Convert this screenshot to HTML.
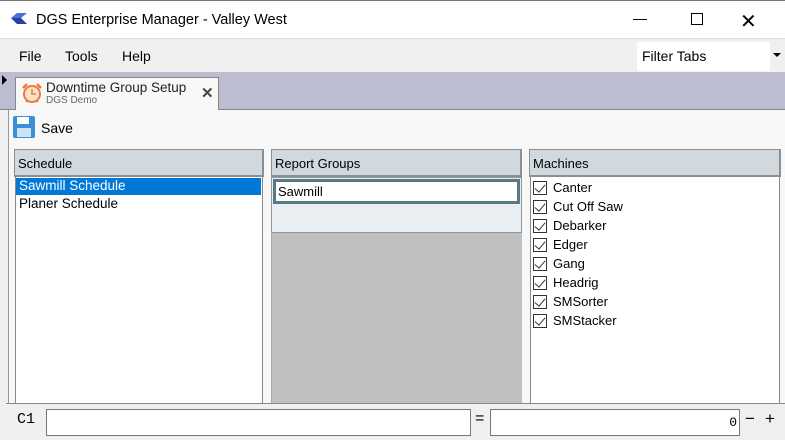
<!DOCTYPE html>
<html><head><meta charset="utf-8"><style>
*{box-sizing:border-box;margin:0;padding:0}
body{width:785px;height:440px;overflow:hidden;background:#f0f0f0;font-family:"Liberation Sans",sans-serif;font-size:13px;color:#000;position:relative}
.a{position:absolute}
.hdr{background:#d1d9df;border:1px solid #8a8f93;border-bottom:2px solid #8a8f93;border-right:2px solid #8a8f93;padding:6px 3px;font-size:13px}
.chk{display:flex;align-items:center;height:19px;font-size:13px}
.cb{width:14px;height:14px;border:1px solid #333;margin:0 6px 0 2px;position:relative;background:#fff}
.cb:after{content:"";position:absolute;left:3px;top:0px;width:5px;height:9px;border-right:1.5px solid #333;border-bottom:1.5px solid #333;transform:rotate(40deg)}
</style></head><body>
<div class="a" style="left:0;top:0;width:785px;height:38px;background:#fff;border-top:1px solid #777"></div>
<svg class="a" style="left:10px;top:11px" width="20" height="16" viewBox="0 0 20 16"><path d="M1 7 L7 2 L17 2 L11 7 Z" fill="#4a6ee0"/><path d="M1 7 L7 13 L17 13 L11 7 Z" fill="#2a3f9e"/></svg>
<div class="a" style="left:36px;top:12px;font-size:14.5px">DGS Enterprise Manager - Valley West</div>
<div class="a" style="left:633px;top:19px;width:14px;border-top:1px solid #000"></div>
<div class="a" style="left:691px;top:13px;width:12px;height:12px;border:1px solid #000"></div>
<div class="a" style="left:740px;top:9px;font-size:20px;font-weight:100">✕</div>
<div class="a" style="left:0;top:38px;width:785px;height:35px;background:#f0f0f0;border-top:1px solid #ddd"></div>
<div class="a" style="left:19px;top:48px;font-size:14px">File</div>
<div class="a" style="left:65px;top:48px;font-size:14px">Tools</div>
<div class="a" style="left:122px;top:48px;font-size:14px">Help</div>
<div class="a" style="left:637px;top:42px;width:133px;height:29px;background:#fff"></div>
<div class="a" style="left:642px;top:48px;font-size:14px">Filter Tabs</div>
<div class="a" style="left:773px;top:53px;border-left:4px solid transparent;border-right:4px solid transparent;border-top:4px solid #000"></div>
<div class="a" style="left:0;top:72px;width:785px;height:38px;background:#bcbdd0;border-bottom:1px solid #888"></div>
<div class="a" style="left:2px;top:75px;border-top:5px solid transparent;border-bottom:5px solid transparent;border-left:5px solid #000"></div>
<div class="a" style="left:15px;top:77px;width:204px;height:34px;background:#f8f8f8;border:1px solid #888;border-bottom:none"></div>
<svg class="a" style="left:21px;top:82px" width="22" height="22" viewBox="0 0 22 22"><circle cx="11" cy="12" r="8" fill="#fde3cf" stroke="#f07a3a" stroke-width="2"/><path d="M11 7 V12 H15" stroke="#f07a3a" stroke-width="1.6" fill="none"/><path d="M2 6 L6 2 M20 6 L16 2" stroke="#f07a3a" stroke-width="2.5"/><path d="M5 20 L7 18 M17 20 L15 18" stroke="#f07a3a" stroke-width="1.6"/></svg>
<div class="a" style="left:46px;top:80px;font-size:13.5px;color:#222">Downtime Group Setup</div>
<div class="a" style="left:46px;top:95px;font-size:10px;color:#666">DGS Demo</div>
<div class="a" style="left:201px;top:84px;font-size:15px;font-weight:bold;color:#444">✕</div>
<div class="a" style="left:8px;top:110px;width:777px;height:294px;background:#f7f7f7;border-left:1px solid #999"></div>
<svg class="a" style="left:12px;top:115px" width="24" height="24" viewBox="0 0 24 24"><rect x="1" y="1" width="22" height="22" rx="2" fill="#3b8fd6"/><rect x="5" y="2" width="12" height="7" fill="#fff"/><rect x="5" y="13" width="14" height="9" fill="#cfe3f3"/></svg>
<div class="a" style="left:41px;top:120px;font-size:14px">Save</div>

<div class="a hdr" style="left:14px;top:149px;width:250px;height:28px">Schedule</div>
<div class="a" style="left:15px;top:177px;width:248px;height:227px;background:#fff;border:1px solid #888;border-top:none"></div>
<div class="a" style="left:16px;top:178px;width:245px;height:17px;background:#0078d7;color:#fff;padding-left:3px;font-size:13.5px">Sawmill Schedule</div>
<div class="a" style="left:19px;top:196px;font-size:13.5px">Planer Schedule</div>

<div class="a hdr" style="left:271px;top:149px;width:251px;height:28px">Report Groups</div>
<div class="a" style="left:271px;top:177px;width:251px;height:227px;background:#c0c0c0;border-left:1px solid #aaa"></div>
<div class="a" style="left:271px;top:177px;width:251px;height:56px;background:#e8eef2;border:1px solid #8a9aa0"></div>
<div class="a" style="left:273px;top:179px;width:247px;height:25px;background:#fff;border:3px solid #5a7880;padding:2px 2px;font-size:13px">Sawmill</div>

<div class="a hdr" style="left:529px;top:149px;width:252px;height:28px">Machines</div>
<div class="a" style="left:530px;top:177px;width:250px;height:227px;background:#fff;border:1px solid #888;border-top:none;padding-top:1px">
<div class="chk"><div class="cb"></div>Canter</div>
<div class="chk"><div class="cb"></div>Cut Off Saw</div>
<div class="chk"><div class="cb"></div>Debarker</div>
<div class="chk"><div class="cb"></div>Edger</div>
<div class="chk"><div class="cb"></div>Gang</div>
<div class="chk"><div class="cb"></div>Headrig</div>
<div class="chk"><div class="cb"></div>SMSorter</div>
<div class="chk"><div class="cb"></div>SMStacker</div>
</div>

<div class="a" style="left:6px;top:403px;width:779px;height:37px;background:#f0f0f0;border-top:1px solid #888"></div>
<div class="a" style="left:17px;top:411px;font-family:'Liberation Mono',monospace;font-size:15px">C1</div>
<div class="a" style="left:46px;top:409px;width:425px;height:27px;background:#fff;border:1px solid #777"></div>
<div class="a" style="left:475px;top:410px;font-size:16px">=</div>
<div class="a" style="left:490px;top:409px;width:250px;height:27px;background:#fff;border:1px solid #777;text-align:right;padding:5px 2px;font-family:'Liberation Mono',monospace;font-size:13px">0</div>
<div class="a" style="left:745px;top:409px;font-size:17px">−</div>
<div class="a" style="left:765px;top:409px;font-size:17px">+</div>
</body></html>
